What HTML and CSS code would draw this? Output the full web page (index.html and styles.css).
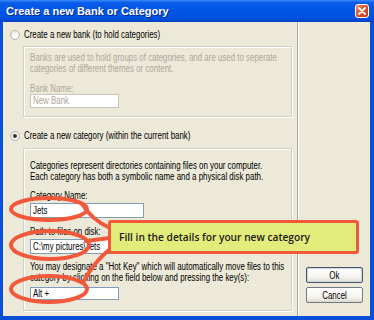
FILE: index.html
```html
<!DOCTYPE html>
<html lang="en">
<head>
  <meta charset="UTF-8" />
  <title>Create a new Bank or Category</title>
  <link rel="stylesheet" href="styles.css">
</head>
<body>
  <div class="window">
    <div class="titlebar">
      <span class="title">Create a new Bank or Category</span>
      <span class="close">
        <svg width="10" height="10" viewBox="0 0 10 10"><path d="M2 2 L8 8 M8 2 L2 8" stroke="#fff" stroke-width="1.8" stroke-linecap="round"/></svg>
      </span>
    </div>

    <div class="client">
      <div class="main">
        <div class="radio-row first">
          <span class="radio"></span>
          <span class="t">Create a new bank (to hold categories)</span>
        </div>
        <div class="group bank-group">
          <p class="muted"><span class="t">Banks are used to hold groups of categories, and are used to seperate</span></p>
          <p class="muted"><span class="t">categories of different themes or content.</span></p>
          <div class="label muted"><span class="t">Bank Name:</span></div>
          <div class="field short disabled"><span class="t">New Bank</span></div>
        </div>

        <div class="radio-row second">
          <span class="radio checked"></span>
          <span class="t">Create a new category (within the current bank)</span>
        </div>
        <div class="group cat-group">
          <p><span class="t">Categories represent directories containing files on your computer.</span></p>
          <p><span class="t">Each category has both a symbolic name and a physical disk path.</span></p>
          <div class="label"><span class="t">Category Name:</span></div>
          <div class="field"><span class="t">Jets</span></div>
          <div class="label"><span class="t">Path to files on disk:</span></div>
          <div class="field"><span class="t">C:\my pictures\Jets</span></div>
          <p class="hotkey"><span class="t">You may designate a "Hot Key" which will automatically move files to this</span></p>
          <p><span class="t">category by clicking on the field below and pressing the key(s):</span></p>
          <div class="field short alt"><span class="t">Alt +</span></div>
        </div>
      </div>

      <div class="side">
        <button class="btn default"><span class="t">Ok</span></button>
        <button class="btn"><span class="t">Cancel</span></button>
      </div>
    </div>

    <!-- annotation over the form -->
    <svg class="marks" width="374" height="320" viewBox="0 0 374 320">
      <g fill="none" stroke="#f2583a" stroke-width="4" stroke-linecap="round">
        <ellipse cx="49" cy="209" rx="38" ry="11" />
        <ellipse cx="50" cy="245" rx="39" ry="14" />
        <ellipse cx="49" cy="289" rx="38" ry="13" />
        <path d="M82 204 Q92 220 110 228" />
        <path d="M86 241 L110 238" />
        <path d="M84 281 Q94 262 110 249" />
      </g>
    </svg>
    <div class="callout">Fill in the details for your new category</div>
  </div>
</body>
</html>
```

FILE: styles.css
```css
body {
  margin: 0;
  font-family: "Liberation Sans", Arial, sans-serif;
  font-size: 10px;
  color: #000;
}

/* the dialog font is narrow, squeeze Liberation Sans to match */
.t {
  display: inline-block;
  white-space: nowrap;
  transform: scaleX(0.79);
  transform-origin: 0 50%;
}

.window {
  position: relative;
  width: 374px;
  height: 320px;
  box-sizing: border-box;
  background: #0a4fd8;
  padding: 0 4px 4px 3px;
  overflow: hidden;
}

.titlebar {
  height: 22px;
  margin: 0 -4px 0 -3px;
  display: flex;
  align-items: center;
  justify-content: space-between;
  padding: 0 5px 0 6px;
  background: linear-gradient(#3a8cf8 0%, #0a5ce9 12%, #0055e5 50%, #0050dd 85%, #0140c0 100%);
}

.title {
  color: #fff;
  font-weight: bold;
  font-size: 11px;
  text-shadow: 1px 1px 0 #0a2a8a;
}

.close {
  width: 14px;
  height: 14px;
  box-sizing: border-box;
  border: 1px solid #fff;
  border-radius: 3px;
  background: linear-gradient(135deg, #f09070, #e0502a 45%, #c43a18);
  display: flex;
  align-items: center;
  justify-content: center;
}

.client {
  height: 294px;
  background: #ece9d8;
  display: flex;
}

.main {
  width: 295px;
  padding-left: 7px;
  box-sizing: border-box;
  border-right: 1px solid #aca899;
}

.radio-row {
  display: flex;
  align-items: center;
  gap: 4px;
  height: 11px;
  line-height: 11px;
}

.radio-row.first { margin-top: 7px; }
.radio-row.second { margin-top: 13px; }

.radio {
  flex: none;
  width: 8px;
  height: 8px;
  border-radius: 50%;
  border: 1px solid #b9b7ae;
  background: radial-gradient(circle at 60% 60%, #fff, #e6e4dc);
  position: relative;
}

.radio.checked::after {
  content: "";
  position: absolute;
  left: 2px;
  top: 2px;
  width: 4px;
  height: 4px;
  border-radius: 50%;
  background: #2f3a2f;
}

.group {
  margin-left: 13px;
  margin-right: 5px;
  border: 1px solid #d0d0bf;
  box-shadow: inset 1px 1px 0 #fff, 1px 1px 0 #fff;
  padding: 0 0 0 6px;
}

.bank-group {
  margin-top: 6px;
  padding-top: 5px;
  padding-bottom: 8px;
}

.cat-group {
  margin-top: 7px;
  padding-top: 11px;
  padding-bottom: 10px;
}

p {
  margin: 0;
  height: 11px;
  line-height: 11px;
}

.muted { color: #aca899; }

.label {
  height: 11px;
  line-height: 11px;
  margin-top: 8px;
}

.bank-group .label { margin-top: 9px; }

.field {
  width: 114px;
  height: 15px;
  box-sizing: border-box;
  margin-top: 2px;
  border: 1px solid #7f9db9;
  background: #fff;
  padding-left: 2px;
  line-height: 13px;
}

.field.short { width: 89px; }
.field.disabled { color: #aca899; border-color: #c9c7ba; height: 14px; line-height: 12px; margin-top: 0; }
.field.alt { height: 13px; line-height: 11px; margin-top: 4px; }

.hotkey { margin-top: 7px; }

.side {
  flex: 1;
  border-left: 1px solid #fff;
  display: flex;
  flex-direction: column;
  justify-content: flex-end;
  align-items: center;
  gap: 4px;
  padding-bottom: 13px;
}

.btn {
  width: 57px;
  height: 16px;
  padding: 0;
  font-family: inherit;
  font-size: 10px;
  color: #000;
  border: 1px solid #6f7a86;
  border-radius: 2px;
  background: linear-gradient(#ffffff, #f3f2ec 70%, #dcd8cb);
  text-align: center;
}

.btn .t { transform-origin: 50% 50%; }

.btn.default {
  border-color: #4d5864;
  box-shadow: inset 0 0 0 1px #c8d4e8;
}

.marks {
  position: absolute;
  left: 0;
  top: 0;
  pointer-events: none;
}

.callout {
  position: absolute;
  left: 108px;
  top: 220px;
  width: 251px;
  height: 34px;
  box-sizing: border-box;
  border: 3px solid #f2583a;
  border-radius: 3px;
  background: #e2ec7a;
  padding-left: 8px;
  display: flex;
  align-items: center;
  font-family: "Open Sans", sans-serif;
  font-weight: 600;
  font-size: 10.2px;
  color: #1a1a1a;
}
```
